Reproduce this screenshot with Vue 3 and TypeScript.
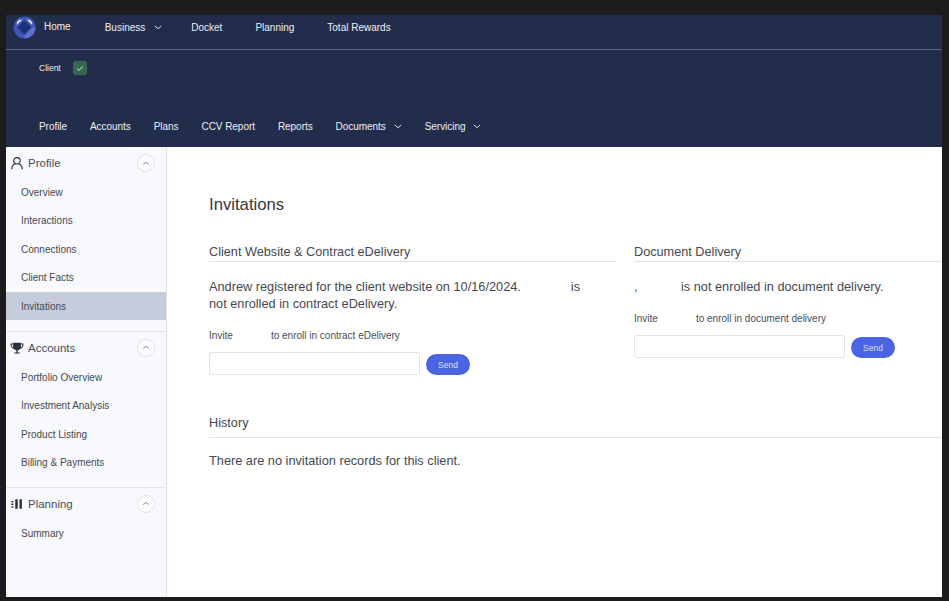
<script setup lang="ts">
interface Section { title: string; icon: string; items: string[] }
const topNav = [
  { label: 'Business', caret: true, cls: 'n-business' },
  { label: 'Docket', caret: false, cls: '' },
  { label: 'Planning', caret: false, cls: '' },
  { label: 'Total Rewards', caret: false, cls: '' },
]
const subNav = [
  { label: 'Profile', caret: false },
  { label: 'Accounts', caret: false },
  { label: 'Plans', caret: false },
  { label: 'CCV Report', caret: false },
  { label: 'Reports', caret: false },
  { label: 'Documents', caret: true },
  { label: 'Servicing', caret: true },
]
const sections: Section[] = [
  { title: 'Profile', icon: 'user', items: ['Overview', 'Interactions', 'Connections', 'Client Facts', 'Invitations'] },
  { title: 'Accounts', icon: 'trophy', items: ['Portfolio Overview', 'Investment Analysis', 'Product Listing', 'Billing & Payments'] },
  { title: 'Planning', icon: 'bars', items: ['Summary'] },
]
</script>

<template>
  <div class="frame">
    <div class="window">
      <header class="header">
        <div class="topbar">
          <svg class="logo" viewBox="0 0 24 24" aria-hidden="true">
            <circle cx="12" cy="12" r="11.500" fill="#3f56b5" />
            <path d="M12 23.500A11.500 11.500 0 0 0 23.500 12H19L12 19z" fill="#5f6fd0" />
            <path d="M4 9.500 9.500 4H6.500L4 6.500zM20 9.500 14.500 4h3L20 6.500z" fill="#dfe5f5" />
            <path d="M12 4.500 19.500 12 12 19.500 4.500 12z" fill="#1d3478" />
          </svg>
          <span class="home">Home</span>
          <nav class="topnav">
            <a v-for="n in topNav" :key="n.label" :class="n.cls">
              {{ n.label }}<svg v-if="n.caret" class="caret" viewBox="0 0 10 6"><path d="M1 1l4 3.500L9 1" /></svg>
            </a>
          </nav>
        </div>
        <div class="client">
          <span>Client</span>
          <span class="check">
            <svg viewBox="0 0 10 8"><path d="M1.500 4l2.300 2.300L8.500 1.500" /></svg>
          </span>
        </div>
        <nav class="subnav">
          <a v-for="n in subNav" :key="n.label">
            {{ n.label }}<svg v-if="n.caret" class="caret" viewBox="0 0 10 6"><path d="M1 1l4 3.500L9 1" /></svg>
          </a>
        </nav>
      </header>

      <div class="body">
        <aside class="sidebar">
          <section v-for="s in sections" :key="s.title" class="side-section">
            <div class="side-head">
              <svg v-if="s.icon === 'user'" class="side-icon" viewBox="0 0 16 16">
                <circle cx="8" cy="5.500" r="3.700" fill="none" stroke="#2b2f3a" stroke-width="1.300" />
                <path d="M2 14.500c.3-3.300 2-5 4-5.700M14 14.500c-.3-3.300-2-5-4-5.700" fill="none" stroke="#2b2f3a" stroke-width="1.300" stroke-linecap="round" />
              </svg>
              <svg v-else-if="s.icon === 'trophy'" class="side-icon" viewBox="0 0 16 16">
                <path d="M3.500 2h9v4.500c0 2.500-2 4-4.500 4s-4.500-1.500-4.500-4z" fill="#2b2f3a" />
                <path d="M3.500 3.500H1.200c0 3 1 4.500 3.300 5M12.500 3.500h2.300c0 3-1 4.500-3.300 5" fill="none" stroke="#2b2f3a" stroke-width="1.200" />
                <path d="M7.200 10h1.600v3H7.200zM4.800 13h6.400v1.400H4.800z" fill="#2b2f3a" />
              </svg>
              <svg v-else class="side-icon" viewBox="0 0 16 16">
                <path d="M1.500 4.500h2.500v1.600H1.500zM1.500 7.500h2.500v1.600H1.500zM1.500 10.500h2.500v1.600H1.500z" fill="#2b2f3a" />
                <path d="M6 2.500h2.800v11H6zM10.800 2.500h2.800v11h-2.800z" fill="#2b2f3a" />
              </svg>
              <span class="side-title">{{ s.title }}</span>
              <span class="collapse">
                <svg viewBox="0 0 10 6"><path d="M1.500 4.500 5 1.500l3.500 3" /></svg>
              </span>
            </div>
            <a v-for="i in s.items" :key="i" class="side-item" :class="{ active: i === 'Invitations' }">{{ i }}</a>
          </section>
        </aside>

        <main class="main">
          <h1>Invitations</h1>
          <div class="columns">
            <section class="col col-a">
              <h2>Client Website &amp; Contract eDelivery</h2>
              <div class="status">
                <div class="line"><span>Andrew registered for the client website on 10/16/2024.</span><span class="gap-a"></span><span>is</span></div>
                <div class="line">not enrolled in contract eDelivery.</div>
              </div>
              <label>Invite<span class="gap-b"></span>to enroll in contract eDelivery</label>
              <div class="form">
                <input type="text" />
                <button type="button">Send</button>
              </div>
            </section>
            <section class="col col-b">
              <h2>Document Delivery</h2>
              <p class="status"><span class="comma">,</span><span class="gap-c"></span>is not enrolled in document delivery.</p>
              <label>Invite<span class="gap-d"></span>to enroll in document delivery</label>
              <div class="form">
                <input type="text" />
                <button type="button">Send</button>
              </div>
            </section>
          </div>
          <section class="history">
            <h2>History</h2>
            <p class="status">There are no invitation records for this client.</p>
          </section>
        </main>
      </div>
    </div>
  </div>
</template>

<style>
html, body { margin: 0; background: #1c1c1c; }
</style>

<style scoped>
.frame {
  width: 949px;
  height: 601px;
  box-sizing: border-box;
  padding: 15px 7px 4px 6px;
  background: #1c1c1c;
  font-family: "Liberation Sans", Arial, sans-serif;
  overflow: hidden;
}
.window {
  height: 582px;
  display: flex;
  flex-direction: column;
  background: #fff;
  overflow: hidden;
}
.header {
  height: 132px;
  flex: none;
  background: #222c4b;
  color: #eef0f5;
  font-size: 10px;
}
.topbar {
  height: 34px;
  display: flex;
  align-items: flex-start;
  border-bottom: 1px solid #5d6683;
}
.logo { width: 23px; height: 23px; margin: 1px 0 0 7px; flex: none; }
.home { margin: 5px 0 0 8px; line-height: 13px; }
.topnav { display: flex; margin: 6px 0 0 34px; line-height: 13px; }
.topnav a { margin-right: 33px; white-space: nowrap; }
.topnav a.n-business { margin-right: 29px; }
.caret { width: 8px; height: 5px; margin-left: 9px; fill: none; stroke: #e4e7ef; stroke-width: 1.200; vertical-align: 1px; }
.subnav .caret { margin-left: 8px; }
.client {
  height: 42px;
  display: flex;
  align-items: flex-start;
  padding: 11px 0 0 33px;
  box-sizing: border-box;
  font-size: 8.500px;
  line-height: 14px;
  gap: 12px;
}
.check {
  width: 14px;
  height: 14px;
  border-radius: 2px;
  background: #35694f;
  display: flex;
  align-items: center;
  justify-content: center;
}
.check svg { width: 8px; height: 7px; fill: none; stroke: #e9f3ec; stroke-width: 1.200; }
.subnav { display: flex; gap: 23px; padding: 28px 0 0 33px; line-height: 13px; letter-spacing: -0.050px; }
.subnav a { white-space: nowrap; }
.body { flex: 1; display: flex; min-height: 0; }
.sidebar {
  width: 161px;
  flex: none;
  box-sizing: border-box;
  background: #f7f9fc;
  border-right: 1px solid #dfe2e8;
}
.side-section { border-bottom: 1px solid #e2e5ea; padding-bottom: 11px; }
.side-section:nth-child(2) { padding-bottom: 10px; }
.side-section:last-child { border-bottom: 0; }
.side-head {
  height: 31px;
  display: flex;
  align-items: center;
  padding: 1px 11px 0 4px;
  box-sizing: border-box;
}
.side-icon { width: 14px; height: 14px; flex: none; }
.side-title { margin-left: 4px; font-size: 11.500px; flex: 1; color: #4a4e58; }
.collapse {
  width: 16px;
  height: 16px;
  border: 1px solid #dfe2e8;
  border-radius: 50%;
  background: #fbfcfe;
  display: flex;
  align-items: center;
  justify-content: center;
}
.collapse svg { width: 8px; height: 5px; fill: none; stroke: #6b7180; stroke-width: 1; }
.side-item {
  display: block;
  height: 28.400px;
  line-height: 30px;
  padding-left: 15px;
  font-size: 10px;
  color: #454954;
}
.side-item.active { background: #c6ccdb; }
.main {
  flex: 1;
  min-width: 0;
  padding: 47px 0 0 42px;
  overflow: hidden;
}
h1 { margin: 0; font-size: 16.700px; font-weight: 400; line-height: 22px; color: #353842; }
h2 {
  margin: 0;
  font-size: 12.700px;
  font-weight: 400;
  line-height: 17px;
  border-bottom: 1px solid #e0e2e7;
  color: #454852;
}
.columns { display: flex; margin-top: 28px; }
.col-a { width: 407px; flex: none; }
.col-b { margin-left: 18px; flex: 1; }
.status { margin: 0; font-size: 12.750px; line-height: 17px; color: #454852; }
.col .status { margin-top: 16px; }
.line { white-space: nowrap; }
.gap-a { display: inline-block; width: 50px; }
.gap-c { display: inline-block; width: 43px; }
.gap-b { display: inline-block; width: 38px; }
.gap-d { display: inline-block; width: 38px; }
.comma { display: inline-block; width: 4px; }
label { display: block; margin-top: 17px; font-size: 10px; line-height: 13px; color: #4a4e58; }
.form { display: flex; align-items: center; gap: 6px; margin-top: 10px; }
input {
  width: 211px;
  height: 23px;
  box-sizing: border-box;
  border: 1px solid #e1e3e8;
  border-radius: 2px;
  background: #fff;
  padding: 0;
  margin: 0;
}
button {
  width: 44px;
  height: 21px;
  border: 0;
  border-radius: 11px;
  background: #4a64e3;
  color: #d9e0fb;
  font: 8.500px "Liberation Sans", Arial, sans-serif;
  padding: 0;
  margin-top: 2px;
}
.history { margin-top: 40px; }
.history h2 { padding-bottom: 5px; }
.history .status { margin-top: 14px; }
</style>
